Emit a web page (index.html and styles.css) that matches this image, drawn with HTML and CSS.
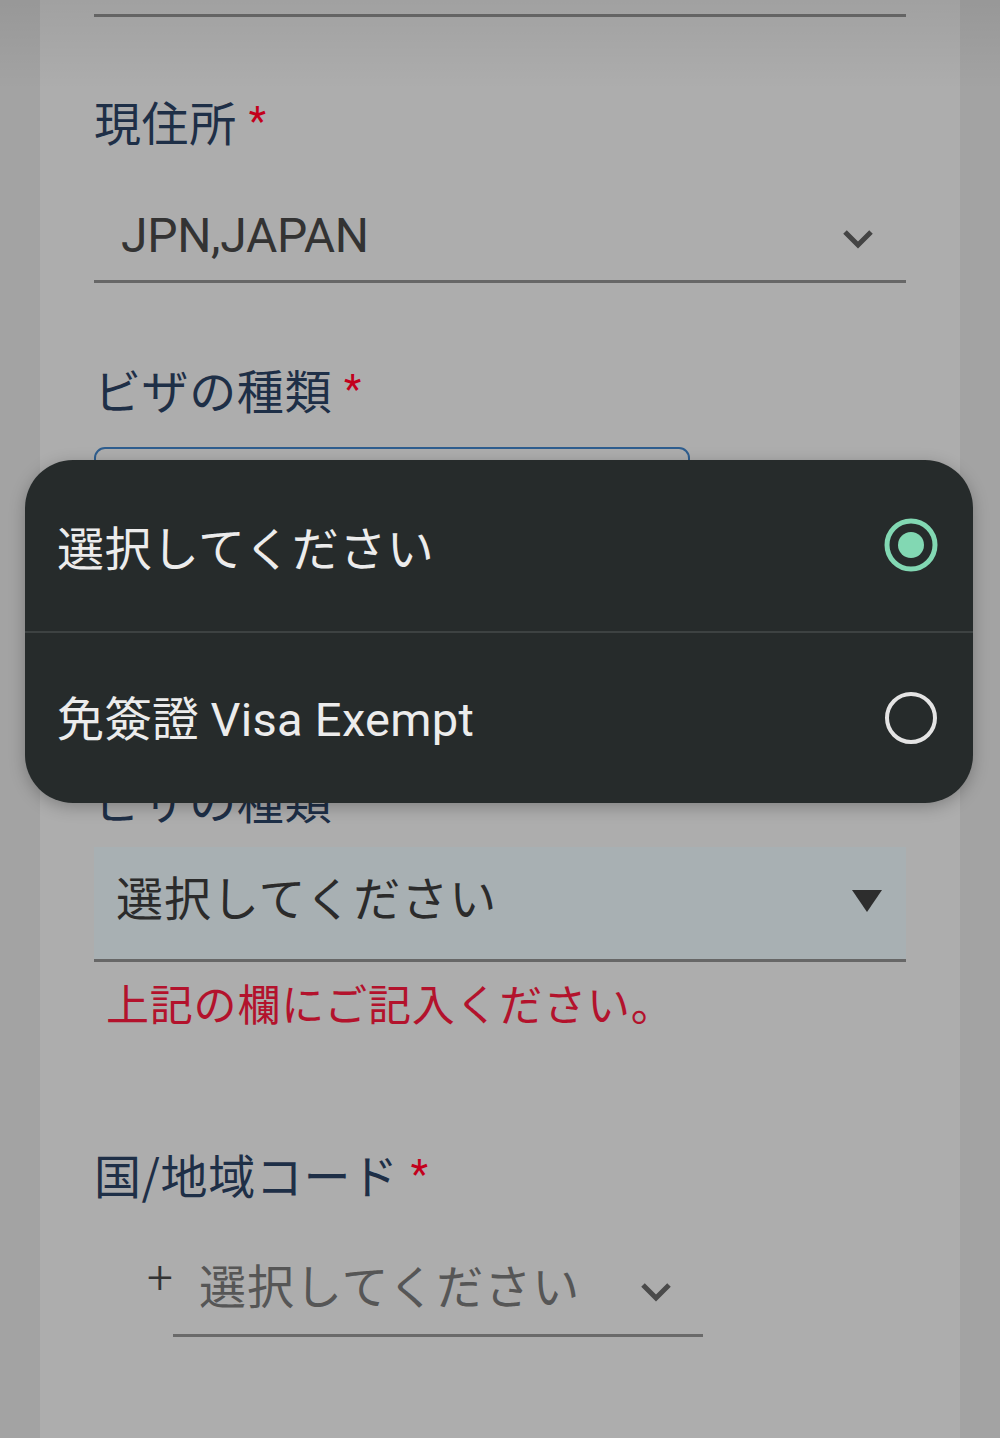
FILE: index.html
```html
<!DOCTYPE html>
<html lang="ja">
<head>
<meta charset="utf-8">
<link rel="stylesheet" href="styles.css">
</head>
<body>
<div class="page">
  <div class="top-rule"></div>

  <div class="label label-first">現住所<span class="req">*</span></div>
  <div class="select-line">
    <span class="select-text latin">JPN,JAPAN</span>
    <svg class="chevron" width="32" height="20" viewBox="0 0 32 20"><polyline points="3,3 16,16 29,3" fill="none" stroke="#444" stroke-width="5"/></svg>
  </div>

  <div class="label label-second">ビザの種類<span class="req">*</span></div>
  <div class="outlined-box"></div>

  <div class="label label-third">ビザの種類<span class="req">*</span></div>
  <div class="filled-select">
    <span class="filled-text">選択してください</span>
    <svg class="triangle" width="30" height="22" viewBox="0 0 30 22"><polygon points="0,0 30,0 15,22" fill="#2d2d2d"/></svg>
  </div>
  <div class="error">上記の欄にご記入ください。</div>

  <div class="label label-fourth">国/地域コード<span class="req">*</span></div>
  <div class="phone-row">
    <span class="plus">+</span>
    <div class="phone-select">
      <span class="phone-text">選択してください</span>
      <svg class="chevron small" width="32" height="20" viewBox="0 0 32 20"><polyline points="3,3 16,16 29,3" fill="none" stroke="#4a4a4a" stroke-width="5"/></svg>
    </div>
  </div>
</div>

<div class="popup">
  <div class="option">
    <span class="option-text">選択してください</span>
    <svg class="radio" width="56" height="56" viewBox="0 0 56 56"><circle cx="28" cy="28" r="24" fill="none" stroke="#82d8b3" stroke-width="5"/><circle cx="28" cy="28" r="13" fill="#82d8b3"/></svg>
  </div>
  <div class="divider"></div>
  <div class="option">
    <span class="option-text">免簽證 <span class="latin">Visa Exempt</span></span>
    <svg class="radio" width="56" height="56" viewBox="0 0 56 56"><circle cx="28" cy="28" r="24" fill="none" stroke="#e4e4e4" stroke-width="4"/></svg>
  </div>
</div>
</body>
</html>
```

FILE: styles.css
```css
* { box-sizing: border-box; }
html, body { margin: 0; padding: 0; }
body {
  background: #a3a3a3;
  font-family: "Noto Sans CJK JP", "Noto Sans", sans-serif;
  width: 1000px;
  height: 1438px;
  overflow: hidden;
  position: relative;
}
body::before {
  content: "";
  position: absolute;
  left: 0; top: 0; right: 0;
  height: 90px;
  background: linear-gradient(rgba(0,0,0,0.07), rgba(0,0,0,0));
  pointer-events: none;
}
.page {
  margin: 0 40px;
  height: 1438px;
  background: #adadad;
  padding: 0 54px;
  display: flex;
  flex-direction: column;
}
.latin { font-family: Roboto, "Noto Sans CJK JP", sans-serif; letter-spacing: 0.3px; }
.top-rule {
  margin-top: 14px;
  height: 3px;
  background: #6a6a6a;
  flex: none;
}
.label {
  font-size: 47px;
  line-height: 47px;
  height: 47px;
  color: #1e2f47;
  flex: none;
  white-space: nowrap;
  letter-spacing: 0.6px;
}
.req {
  color: #c3001c;
  font-family: Roboto, sans-serif;
  font-size: 40px;
  margin-left: 12px;
  vertical-align: 6px;
}
.label-first { margin-top: 80px; }
.select-line {
  flex: none;
  height: 139px;
  border-bottom: 3px solid #676767;
  display: flex;
  align-items: flex-end;
  justify-content: space-between;
  padding: 0 32px 21px 27px;
}
.select-text {
  font-size: 48px;
  line-height: 47px;
  color: #333;
  letter-spacing: -0.3px;
}
.chevron { margin-bottom: 10px; }
.label-second { margin-top: 82px; }
.outlined-box {
  flex: none;
  width: 596px;
  height: 114px;
  margin-top: 35px;
  border: 2px solid #2f5e8f;
  border-radius: 11px;
}
.label-third { margin-top: 214px; }
.filled-select {
  flex: none;
  margin-top: 25px;
  height: 115px;
  background: #a8b0b3;
  border-bottom: 3px solid #676767;
  display: flex;
  align-items: flex-start;
  justify-content: space-between;
  padding: 25px 24px 0 22px;
}
.filled-text {
  font-size: 47px;
  line-height: 47px;
  color: #2b2b2b;
  letter-spacing: 1px;
}
.triangle { margin-top: 18px; }
.error {
  flex: none;
  margin-top: 19px;
  padding-left: 12px;
  font-size: 43px;
  line-height: 43px;
  color: #b3122c;
  letter-spacing: 0.8px;
}
.label-fourth { margin-top: 126px; }
.phone-row {
  flex: none;
  display: flex;
  align-items: flex-start;
  margin-top: 63px;
  padding-left: 53px;
}
.plus {
  font-family: Roboto, sans-serif;
  font-weight: 300;
  font-size: 46px;
  line-height: 30px;
  color: #333;
  width: 26px;
  margin-top: 2px;
}
.phone-select {
  width: 530px;
  height: 77px;
  border-bottom: 3px solid #6a6a6a;
  display: flex;
  align-items: flex-start;
  padding-left: 26px;
}
.phone-text {
  font-size: 47px;
  line-height: 47px;
  color: #565656;
  letter-spacing: 1px;
}
.chevron.small { margin: 22px 0 0 60px; }

.popup {
  position: absolute;
  left: 25px;
  top: 460px;
  width: 948px;
  height: 343px;
  background: #262b2b;
  border-radius: 48px;
  box-shadow: 0 4px 16px rgba(0,0,0,0.25);
  display: flex;
  flex-direction: column;
  overflow: hidden;
}
.option {
  flex: 1;
  display: flex;
  align-items: center;
  justify-content: space-between;
  padding: 0 34px 0 32px;
}
.option-text {
  font-size: 47px;
  line-height: 47px;
  color: #ececec;
  white-space: nowrap;
  letter-spacing: 0.5px;
}
.divider {
  flex: none;
  height: 2px;
  background: #3d4242;
}
```
